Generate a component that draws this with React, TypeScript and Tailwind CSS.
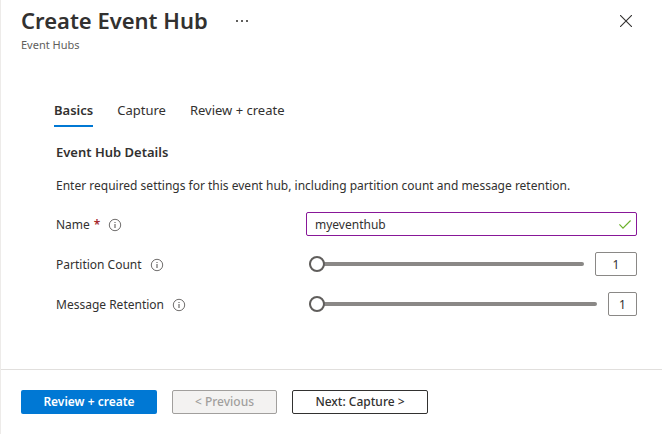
import { useState } from "react";
import type { ReactNode } from "react";

function InfoIcon() {
  return (
    <svg className="ml-2 h-3.5 w-3.5 shrink-0" viewBox="0 0 14 14" fill="none" stroke="#605e5c" aria-hidden="true">
      <circle cx="7" cy="7" r="5.7" strokeWidth="0.9" />
      <path d="M7 6v4M7 4v1" strokeWidth="1.1" />
    </svg>
  );
}

function Field({ id, label, required, children }: { id: string; label: string; required?: boolean; children: ReactNode }) {
  return (
    <div className="flex h-6 items-center">
      <div className="flex w-[250px] shrink-0 items-center pt-0.5">
        <label htmlFor={id}>
          {label}
          {required && <span className="ml-1 font-semibold text-[#a4262c]">*</span>}
        </label>
        <InfoIcon />
      </div>
      <div className="flex min-w-0 flex-1 items-center">{children}</div>
    </div>
  );
}

function SliderField({ id, label, max, boxClass }: { id: string; label: string; max: number; boxClass: string }) {
  const [value, setValue] = useState(1);
  return (
    <Field id={id} label={label}>
      <input
        id={id}
        type="range"
        min={1}
        max={max}
        value={value}
        onChange={(e) => setValue(Number(e.target.value))}
        className="ml-[3px] h-4 min-w-0 flex-1 appearance-none bg-transparent [&::-webkit-slider-runnable-track]:h-1 [&::-webkit-slider-runnable-track]:rounded-full [&::-webkit-slider-runnable-track]:bg-[#8a8886] [&::-webkit-slider-thumb]:-mt-1.5 [&::-webkit-slider-thumb]:h-4 [&::-webkit-slider-thumb]:w-4 [&::-webkit-slider-thumb]:appearance-none [&::-webkit-slider-thumb]:rounded-full [&::-webkit-slider-thumb]:border-2 [&::-webkit-slider-thumb]:border-solid [&::-webkit-slider-thumb]:border-[#605e5c] [&::-webkit-slider-thumb]:bg-white"
      />
      <input
        type="text"
        aria-label={`${label} value`}
        value={value}
        onChange={(e) => setValue(Number(e.target.value) || 1)}
        className={`ml-[11px] h-6 rounded-xs border border-[#8a8886] text-center ${boxClass}`}
      />
    </Field>
  );
}

const tabs = ["Basics", "Capture", "Review + create"];

export default function App() {
  const [active, setActive] = useState("Basics");
  const [name, setName] = useState("myeventhub");
  return (
    <main className="min-h-screen border-l border-[#edebe9] bg-white font-['Segoe_UI','Noto_Sans',sans-serif] text-[12px] leading-[18px] text-[#323130]">
      <header className="flex items-start justify-between pt-1 pr-7 pl-5">
        <div>
          <div className="flex items-center">
            <h1 className="text-[22px] leading-8 font-semibold">Create Event Hub</h1>
            <button aria-label="More options" className="ml-[26px] px-0.5 pt-1 pb-0.5">
              <svg width="12" height="2" viewBox="0 0 12 2" fill="#605e5c">
                <path d="M0 0h2v2H0zM5 0h2v2H5zM10 0h2v2h-2z" />
              </svg>
            </button>
          </div>
          <p className="text-[11px] text-[#605e5c]">Event Hubs</p>
        </div>
        <button aria-label="Close" className="mt-[9px] p-0.5">
          <svg width="12" height="12" viewBox="0 0 12 12" stroke="#323130" strokeWidth="1.1">
            <path d="M0 0l12 12M12 0L0 12" />
          </svg>
        </button>
      </header>

      <nav role="tablist" className="mt-[46px] ml-[53px] flex gap-6 text-[13px]">
        {tabs.map((tab) => (
          <button
            key={tab}
            role="tab"
            aria-selected={tab === active}
            onClick={() => setActive(tab)}
            className={`h-[27px] border-b-2 pb-1.5 ${tab === active ? "border-[#0078d4] font-semibold" : "border-transparent"}`}
          >
            {tab}
          </button>
        ))}
      </nav>

      <form className="pr-[25px] pl-[55px]" onSubmit={(e) => e.preventDefault()}>
        <h2 className="mt-4 text-[13px] font-semibold">Event Hub Details</h2>
        <p className="mt-4 mb-[17px]">
          Enter required settings for this event hub, including partition count and message retention.
        </p>
        <div className="grid gap-4">
          <Field id="name" label="Name" required>
            <div className="relative flex-1">
              <input
                id="name"
                type="text"
                value={name}
                onChange={(e) => setName(e.target.value)}
                className="block h-6 w-full rounded-xs border border-[#881798] pr-7 pl-2"
              />
              <svg className="absolute top-2 right-1.5" width="12" height="9" viewBox="0 0 12 9" fill="none" stroke="#6bb02a" strokeWidth="1.2" aria-hidden="true">
                <path d="M.4 4.4l3.6 3.7L11.6.5" />
              </svg>
            </div>
          </Field>
          <SliderField id="partitions" label="Partition Count" max={32} boxClass="w-[42px]" />
          <SliderField id="retention" label="Message Retention" max={7} boxClass="w-[29px]" />
        </div>
      </form>

      <footer className="mt-[53px] flex gap-[15px] border-t border-[#e1dfdd] px-5 py-5 font-semibold">
        <button className="h-6 w-[136px] rounded-xs bg-[#0078d4] text-white">Review + create</button>
        <button disabled className="h-6 w-[105px] rounded-xs border border-[#a19f9d] bg-[#f3f2f1] font-medium text-[#a19f9d]">
          &lt; Previous
        </button>
        <button className="h-6 w-[136px] rounded-xs border border-[#323130] bg-white font-medium">Next: Capture &gt;</button>
      </footer>
    </main>
  );
}
